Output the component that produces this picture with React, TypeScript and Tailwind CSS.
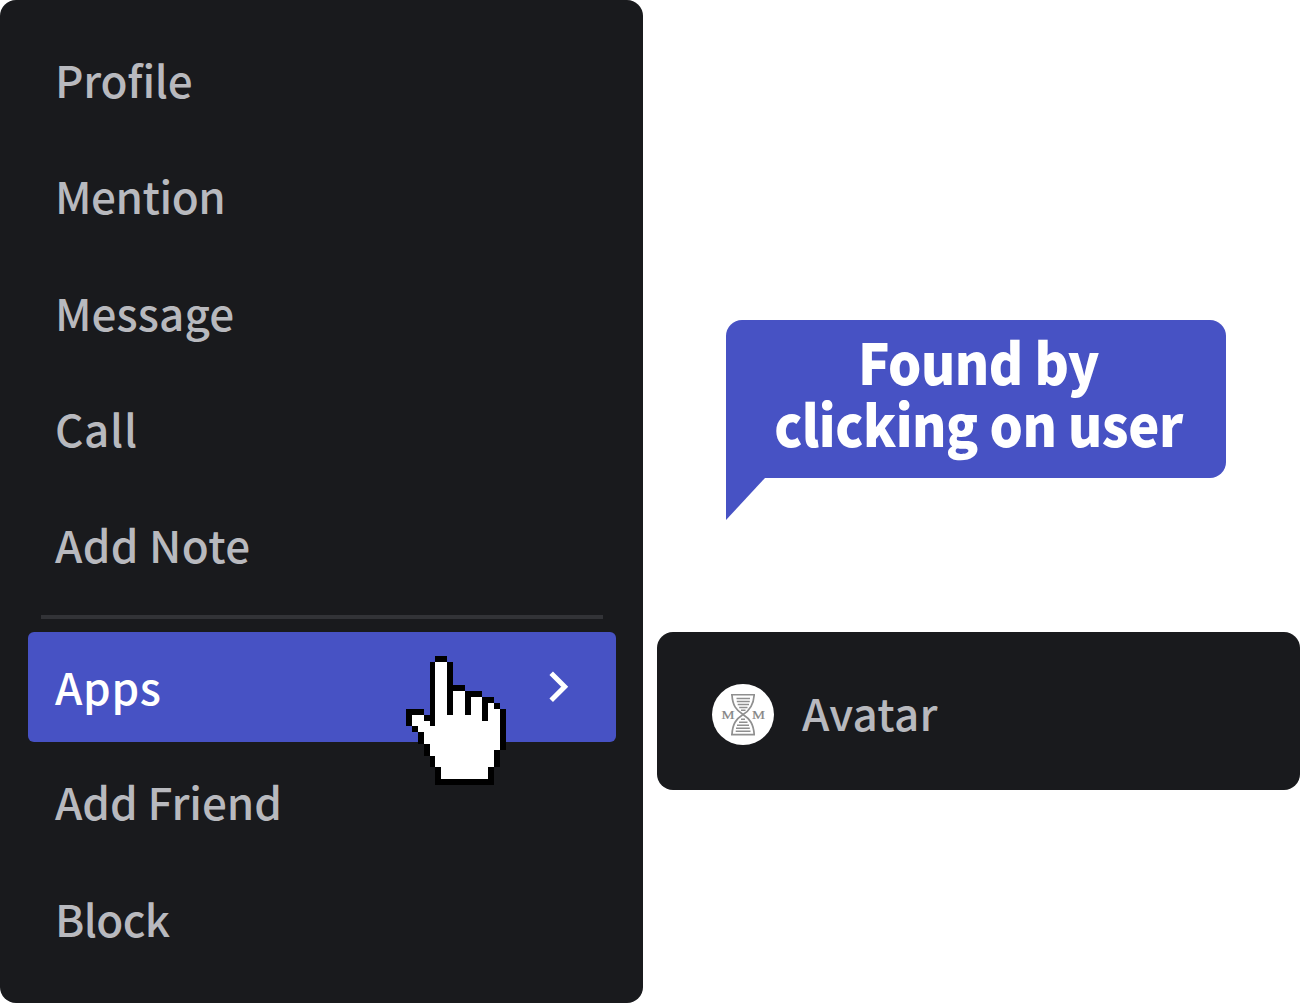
import React from "react";

type Item = { label: string; tracking: string };

const topItems: Item[] = [
  { label: "Profile", tracking: "tracking-[-0.2px]" },
  { label: "Mention", tracking: "tracking-[-0.45px]" },
  { label: "Message", tracking: "tracking-[0.1px]" },
  { label: "Call", tracking: "tracking-[0.7px]" },
  { label: "Add Note", tracking: "tracking-[0.35px]" },
];

const bottomItems: Item[] = [
  { label: "Add Friend", tracking: "tracking-[-0.05px]" },
  { label: "Block", tracking: "tracking-[-0.6px]" },
];

function MenuItem({ label, tracking }: Item) {
  return (
    <li className="flex h-[116.25px] items-center pb-[6px] pl-[55px]">
      <span className={tracking}>{label}</span>
    </li>
  );
}

function HandCursor() {
  return (
    <svg
      className="absolute left-[378px] top-6 h-[129px] w-[100px]"
      viewBox="0 0 17 22"
      preserveAspectRatio="none"
      shapeRendering="crispEdges"
    >
      <path
        fill="#fff"
        d="M4 1H8V6H11V7H14V8H15V9H16V16H15V19H14V21H5V19H4V17H3V15H2V12H1V10H3V11H4Z"
      />
      <path
        fill="#000"
        d="M5 0h2v1H5zM4 1h1v11H4zM7 1h1v9H7zM8 5h2v1H8zM10 6h3v1h-3zM10 7h1v3h-1zM13 7h2v1h-2zM13 8h1v3h-1zM15 8h1v1h-1zM16 9h1v7h-1zM15 16h1v3h-1zM14 19h1v3h-1zM5 21h9v1H5zM5 19h1v2H5zM4 17h1v2H4zM3 15h1v2H3zM2 13h1v2H2zM1 12h1v1H1zM0 9h1v3H0zM1 9h2v1H1zM3 10h1v1H3z"
      />
    </svg>
  );
}

function AppLogo() {
  return (
    <svg className="h-[61px] w-[62px] shrink-0" viewBox="0 0 62 61" preserveAspectRatio="none">
      <ellipse cx="31" cy="30.5" rx="31" ry="30.5" fill="#fff" />
      <g fill="none" stroke="#8f8f8f">
        <path strokeWidth="1.6" d="M19 10.800H43M19 50.600H43" />
        <path strokeWidth="1.7" d="M20 11C20.500 21 24 26 31 30.500C38 35 41.500 40 42.200 50.500" />
        <path strokeWidth="1.7" d="M42.200 11C41.500 21 38 26.500 31 30.500C24 35 20.500 40 20 50.500" />
        <path strokeWidth="1.5" d="M24.500 14.500H38M24.800 17.500H37.800M25.700 20.500H37M27.200 23.500H35.500M29 26.300H33.500M29 35.300H33M27 38.300H35.500M25 41.300H37M24 44.300H37.800M23.700 47.300H38.500" />
      </g>
      <g fontSize="12" fontFamily="Liberation Serif, serif" fill="#858585" stroke="#858585" strokeWidth="0.2">
        <text x="9.500" y="34.500" textLength="13" lengthAdjust="spacingAndGlyphs">M</text>
        <text x="40" y="34.500" textLength="13" lengthAdjust="spacingAndGlyphs">M</text>
      </g>
    </svg>
  );
}

export default function App() {
  return (
    <main className="flex h-[1003px] w-[1300px] gap-3.5 overflow-hidden bg-white font-['Noto_Sans_CJK_SC',sans-serif] text-[44px] leading-none font-medium text-[#b8b9be]">
      <nav className="h-full w-[643px] shrink-0 rounded-2xl bg-[#191a1d] pt-6">
        <ul>
          {topItems.map((item) => (
            <MenuItem key={item.label} {...item} />
          ))}
        </ul>
        <div className="mt-[10px] mr-10 ml-[41px] h-1 bg-[#323337]" />
        <div className="relative mt-[13px] mr-[27px] ml-7 flex h-[110px] items-center justify-between rounded-md bg-[#4752c4] pr-[47px] pl-[27px] text-white">
          <span className="pb-[3px] tracking-[0.7px]">Apps</span>
          <svg className="h-8 w-5" viewBox="0 0 20 32" fill="none" stroke="#fff" strokeWidth="5">
            <path d="M2.200 2.200L15.700 15.700L2.200 29.200" />
          </svg>
          <HandCursor />
        </div>
        <ul className="pt-[4px]">
          {bottomItems.map((item) => (
            <MenuItem key={item.label} {...item} />
          ))}
        </ul>
      </nav>

      <aside className="flex w-[643px] flex-col pt-80">
        <div className="ml-[69px] flex w-[500px] flex-col">
          <div className="h-[158px] rounded-2xl rounded-bl-none bg-[#4752c4] pt-[10px] pl-[5px]">
            <p className="scale-x-[0.92] text-center text-[57px] leading-[61.5px] font-black tracking-[-0.5px] whitespace-nowrap text-white">
              <span className="block">Found by</span>
              <span className="block">clicking on user</span>
            </p>
          </div>
          <svg className="h-[42px] w-[39px]" viewBox="0 0 39 42">
            <path fill="#4752c4" d="M0 0H39L0 42Z" />
          </svg>
        </div>
        <div className="mt-28 flex h-[158px] items-center rounded-2xl bg-[#191a1d] pl-[55px]">
          <div className="flex items-center gap-7 pt-[7px]">
            <AppLogo />
            <span className="pb-[5px] tracking-[0.3px]">Avatar</span>
          </div>
        </div>
      </aside>
    </main>
  );
}
